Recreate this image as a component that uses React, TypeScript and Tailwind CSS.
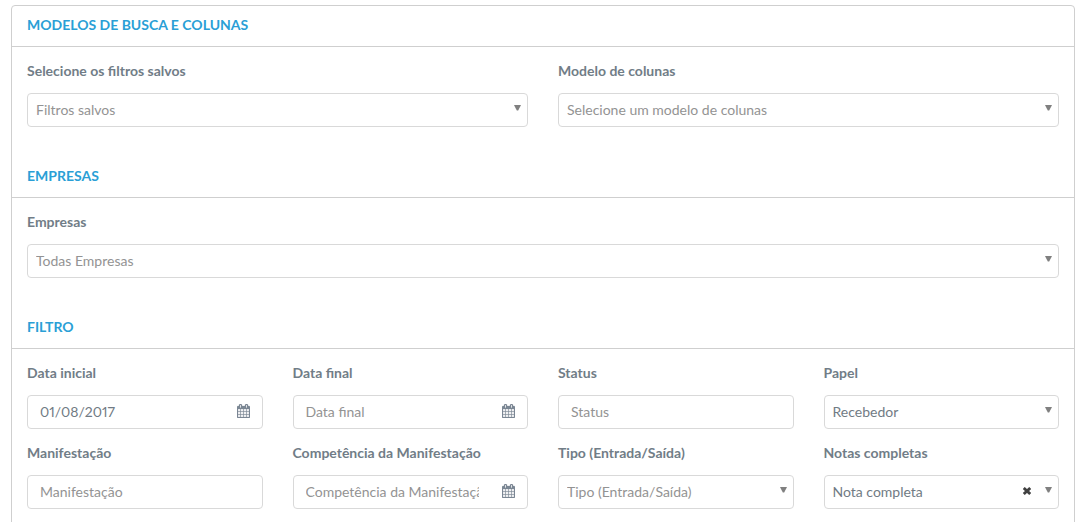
import { useState } from 'react';
import type { ReactNode } from 'react';

interface SectionProps {
  title: string;
  children: ReactNode;
}

interface FieldProps {
  id: string;
  label: string;
  placeholder: string;
}

interface SelectFieldProps extends FieldProps {
  options: string[];
  initial?: string;
  clearable?: boolean;
}

interface InputFieldProps extends FieldProps {
  initial?: string;
  calendar?: boolean;
}

function CalendarIcon() {
  return (
    <svg
      viewBox="0 0 1664 1792"
      className="h-[14px] w-[13px]"
      fill="currentColor"
      stroke="currentColor"
      strokeWidth="30"
      aria-hidden="true"
    >
      <path d="M128 1664h288v-288h-288v288zM480 1664h320v-288h-320v288zM128 1312h288v-320h-288v320zM480 1312h320v-320h-320v320zM128 928h288v-288h-288v288zM864 1664h320v-288h-320v288zM480 928h320v-288h-320v288zM1248 1664h288v-288h-288v288zM864 1312h320v-320h-320v320zM512 448v-288q0-13-9.5-22.5t-22.5-9.5h-64q-13 0-22.5 9.5t-9.5 22.5v288q0 13 9.5 22.5t22.5 9.5h64q13 0 22.5-9.5t9.5-22.5zM1248 1312h288v-320h-288v320zM864 928h320v-288h-320v288zM1248 928h288v-288h-288v288zM1280 448v-288q0-13-9.5-22.5t-22.5-9.5h-64q-13 0-22.5 9.5t-9.5 22.5v288q0 13 9.5 22.5t22.5 9.5h64q13 0 22.5-9.5t9.5-22.5zM1664 384v1280q0 52-38 90t-90 38h-1408q-52 0-90-38t-38-90v-1280q0-52 38-90t90-38h128v-96q0-66 47-113t113-47h64q66 0 113 47t47 113v96h384v-96q0-66 47-113t113-47h64q66 0 113 47t47 113v96h128q52 0 90 38t38 90z" />
    </svg>
  );
}

function Section({ title, children }: SectionProps) {
  return (
    <section className="pb-[30px]">
      <h2 className="border-b border-[#cfcfcf] px-[15px] pt-[9px] pb-[11px] text-sm leading-5 font-bold text-[#2a9fd6] uppercase">
        {title}
      </h2>
      <div className="px-[15px] pt-[14px]">{children}</div>
    </section>
  );
}

function SelectField({ id, label, placeholder, options, initial = '', clearable = false }: SelectFieldProps) {
  const [value, setValue] = useState(initial);

  return (
    <div className="min-w-0">
      <label htmlFor={id} className="mb-3 block text-sm leading-5 font-bold text-[#717d87]">
        {label}
      </label>
      <div className="relative">
        <select
          id={id}
          value={value}
          onChange={(e) => setValue(e.target.value)}
          className={`block h-[34px] w-full appearance-none rounded border border-[#d9d9d9] bg-white pr-6 pl-2 text-sm ${value ? 'text-[#717b84]' : 'text-[#939393]'}`}
        >
          <option value="">{placeholder}</option>
          {options.map((option) => (
            <option key={option} value={option}>{option}</option>
          ))}
        </select>
        {clearable && value && (
          <button
            type="button"
            aria-label="Limpar"
            onClick={() => setValue('')}
            className="absolute top-3 right-7 text-[#404040]"
          >
            <svg viewBox="0 0 8 8" className="h-2 w-2" stroke="currentColor" strokeWidth="2.8" aria-hidden="true">
              <path d="M.8 1l6.4 6M7.2 1L.8 7" />
            </svg>
          </button>
        )}
        <svg
          viewBox="0 0 7 6"
          className="pointer-events-none absolute top-3 right-[7px] h-[6px] w-[7px]"
          fill="#808080"
          aria-hidden="true"
        >
          <path d="M0 0h7L4.2 5.5H2.8z" />
        </svg>
      </div>
    </div>
  );
}

function InputField({ id, label, placeholder, initial = '', calendar = false }: InputFieldProps) {
  const [value, setValue] = useState(initial);

  return (
    <div className="min-w-0">
      <label htmlFor={id} className="mb-3 block text-sm leading-5 font-bold text-[#717d87]">
        {label}
      </label>
      <div className="relative">
        <input
          id={id}
          type="text"
          value={value}
          placeholder={placeholder}
          onChange={(e) => setValue(e.target.value)}
          className={`block h-[34px] w-full rounded border border-[#d9d9d9] bg-white pb-[2px] pl-3 text-sm text-[#717b84] proportional-nums placeholder:text-[#939393] ${calendar ? 'pr-12' : 'pr-3'}`}
        />
        {calendar && (
          <button type="button" aria-label="Abrir calendário" className="absolute top-[9px] right-[13px] text-[#7b8894]">
            <CalendarIcon />
          </button>
        )}
      </div>
    </div>
  );
}

export default function App() {
  return (
    <main className="min-h-screen bg-white pt-[5px] pr-[7px] pl-[11px] font-['Lato',sans-serif]">
      <form className="rounded border border-[#cfcfcf]">
        <Section title="Modelos de busca e colunas">
          <div className="grid grid-cols-2 gap-[30px]">
            <SelectField id="filtros" label="Selecione os filtros salvos" placeholder="Filtros salvos" options={['Filtro padrão']} />
            <SelectField id="modelo" label="Modelo de colunas" placeholder="Selecione um modelo de colunas" options={['Modelo padrão']} />
          </div>
        </Section>

        <Section title="Empresas">
          <SelectField id="empresas" label="Empresas" placeholder="Todas Empresas" options={['Matriz', 'Filial']} />
        </Section>

        <Section title="Filtro">
          <div className="grid grid-cols-4 gap-x-[30px] gap-y-[14px]">
            <InputField id="data-inicial" label="Data inicial" placeholder="Data inicial" initial="01/08/2017" calendar />
            <InputField id="data-final" label="Data final" placeholder="Data final" calendar />
            <InputField id="status" label="Status" placeholder="Status" />
            <SelectField id="papel" label="Papel" placeholder="Papel" options={['Recebedor', 'Emissor']} initial="Recebedor" />
            <InputField id="manifestacao" label="Manifestação" placeholder="Manifestação" />
            <InputField id="competencia" label="Competência da Manifestação" placeholder="Competência da Manifestação" calendar />
            <SelectField id="tipo" label="Tipo (Entrada/Saída)" placeholder="Tipo (Entrada/Saída)" options={['Entrada', 'Saída']} />
            <SelectField
              id="notas"
              label="Notas completas"
              placeholder="Notas completas"
              options={['Nota completa', 'Nota resumida']}
              initial="Nota completa"
              clearable
            />
          </div>
        </Section>
      </form>
    </main>
  );
}
